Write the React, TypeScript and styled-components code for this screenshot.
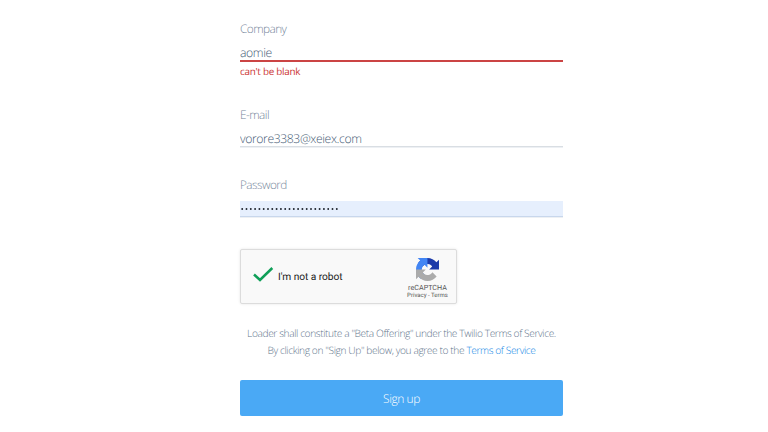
import React from "react";
import styled, { createGlobalStyle } from "styled-components";

const GlobalStyle = createGlobalStyle`
  *, *::before, *::after { box-sizing: border-box; }
  body {
    margin: 0;
    background: #fff;
    font-family: "Open Sans", sans-serif;
    font-weight: 300;
    overflow: hidden;
    text-rendering: geometricPrecision;
  }
`;

const Form = styled.form`
  display: flex;
  flex-direction: column;
  width: 323px;
  height: 432px;
  margin-left: 240px;
  padding-top: 21px;
`;

const Field = styled.div<{ $height: number }>`
  display: flex;
  flex-direction: column;
  height: ${(p) => p.$height}px;
`;

const Label = styled.label`
  height: 24px;
  line-height: 16px;
  font-size: 11.8px;
  letter-spacing: -0.55px;
  color: #75869a;
`;

const Control = styled.div<{ $invalid?: boolean; $filled?: boolean }>`
  display: flex;
  height: ${(p) => (p.$invalid ? 17 : 16)}px;
  background: ${(p) => (p.$filled ? "#e6effd" : "transparent")};
  border-bottom: ${(p) =>
    p.$invalid ? "2px solid #cb4444" : p.$filled ? "1px solid #c8d7ec" : "1px solid #d9dee3"};
  box-shadow: ${(p) => (p.$invalid ? "none" : "0 1px 0 #edf0f4")};
`;

const Input = styled.input`
  width: 100%;
  padding: 0;
  border: 0;
  outline: 0;
  background: transparent;
  font: 300 12.2px/16px "Open Sans", sans-serif;
  letter-spacing: -0.4px;
  text-rendering: geometricPrecision;
  color: #465b75;
`;

const Dots = styled.svg`
  display: block;
  width: 100px;
  height: 16px;
  fill: #1c222b;
`;

const ErrorText = styled.p`
  margin: 2px 0 0;
  font-size: 9.9px;
  letter-spacing: -0.27px;
  line-height: 14px;
  font-weight: 400;
  color: #cb3434;
`;

const Captcha = styled.div`
  display: flex;
  align-items: center;
  flex: none;
  width: 217px;
  height: 55px;
  padding-left: 12px;
  background: #f9f9f9;
  border: 1px solid #dcdcdc;
  border-radius: 2px;
  box-shadow: 0 0 3px rgba(0, 0, 0, 0.1);
  font-family: Roboto, sans-serif;
  font-weight: 400;
`;

const Check = styled.svg`
  width: 21px;
  height: 17px;
  margin-top: -5px;
`;

const CaptchaText = styled.span`
  flex: 1;
  margin: 2px 0 0 4px;
  font-size: 10.2px;
  letter-spacing: -0.05px;
  line-height: 14px;
  color: #222;
`;

const Brand = styled.div`
  display: flex;
  flex-direction: column;
  align-items: center;
  align-self: flex-start;
  width: 57px;
  padding-top: 8px;
  color: #555;
`;

const Logo = styled.svg`
  width: 23px;
  height: 23px;
`;

const BrandName = styled.span`
  margin-top: 2px;
  font-size: 7.2px;
  line-height: 9px;
`;

const BrandLinks = styled.span`
  font-size: 6px;
  line-height: 8px;
  white-space: nowrap;
`;

const Legal = styled.p`
  margin: 21px 0 0;
  font-size: 10.2px;
  letter-spacing: -0.4px;
  line-height: 17px;
  text-align: center;
  white-space: nowrap;
  color: #62758c;
`;

const LegalLink = styled.a`
  color: #1186e6;
`;

const Submit = styled.button`
  flex: none;
  height: 36px;
  margin-top: 21px;
  padding: 1px 0 0;
  border: 0;
  border-radius: 2px;
  background: #4aa9f5;
  color: #fff;
  font: 300 12px/16px "Open Sans", sans-serif;
  letter-spacing: -0.45px;
  text-rendering: geometricPrecision;
`;

const dotPositions = Array.from({ length: 23 }, (_, i) => 2.2 + i * 4.3);

export default function App() {
  return (
    <>
      <GlobalStyle />
      <Form>
        <Field $height={86}>
          <Label>Company</Label>
          <Control $invalid>
            <Input defaultValue="aomie" spellCheck={false} />
          </Control>
          <ErrorText>can't be blank</ErrorText>
        </Field>
        <Field $height={70}>
          <Label>E-mail</Label>
          <Control>
            <Input defaultValue="vorore3383@xeiex.com" spellCheck={false} />
          </Control>
        </Field>
        <Field $height={72}>
          <Label>Password</Label>
          <Control $filled>
            <Dots viewBox="0 0 100 16">
              {dotPositions.map((x) => (
                <circle key={x} cx={x} cy={8} r={0.95} />
              ))}
            </Dots>
          </Control>
        </Field>
        <Captcha>
          <Check viewBox="0 0 21 17">
            <path d="M1 8.5 7 14 19.3 2" fill="none" stroke="#0f9f58" strokeWidth="2.5" />
          </Check>
          <CaptchaText>I'm not a robot</CaptchaText>
          <Brand>
            <Logo viewBox="0 0 64 64">
              <path
                fill="#1c3aa9"
                d="M64 31.955l-.033-1.37V4.687l-7.16 7.16C50.948 4.674 42.033.093 32.05.093c-10.4 0-19.622 4.96-25.458 12.64l11.736 11.86a15.55 15.55 0 0 1 4.754-5.334c2.05-1.6 4.952-2.906 8.968-2.906.485 0 .86.057 1.135.163 4.976.393 9.288 3.14 11.828 7.124l-8.307 8.307L64 31.953"
              />
              <path
                fill="#4285f4"
                d="M31.862.094l-1.37.033H4.594l7.16 7.16C4.58 13.147 0 22.06 0 32.046c0 10.4 4.96 19.622 12.64 25.458L24.5 45.768a15.55 15.55 0 0 1-5.334-4.754c-1.6-2.05-2.906-4.952-2.906-8.968 0-.485.057-.86.163-1.135.393-4.976 3.14-9.288 7.124-11.828l8.307 8.307L31.86.095"
              />
              <path
                fill="#ababab"
                d="M.001 32.045l.033 1.37v25.898l7.16-7.16c5.86 7.173 14.774 11.754 24.76 11.754 10.4 0 19.622-4.96 25.458-12.64l-11.736-11.86a15.55 15.55 0 0 1-4.754 5.334c-2.05 1.6-4.952 2.906-8.968 2.906-.485 0-.86-.057-1.135-.163-4.976-.393-9.288-3.14-11.828-7.124l8.307-8.307c-10.522.04-22.4.066-27.295-.005"
              />
            </Logo>
            <BrandName>reCAPTCHA</BrandName>
            <BrandLinks>Privacy - Terms</BrandLinks>
          </Brand>
        </Captcha>
        <Legal>
          Loader shall constitute a "Beta Offering" under the Twilio Terms of Service.
          <br />
          By clicking on "Sign Up" below, you agree to the <LegalLink>Terms of Service</LegalLink>
        </Legal>
        <Submit type="button">Sign up</Submit>
      </Form>
    </>
  );
}
